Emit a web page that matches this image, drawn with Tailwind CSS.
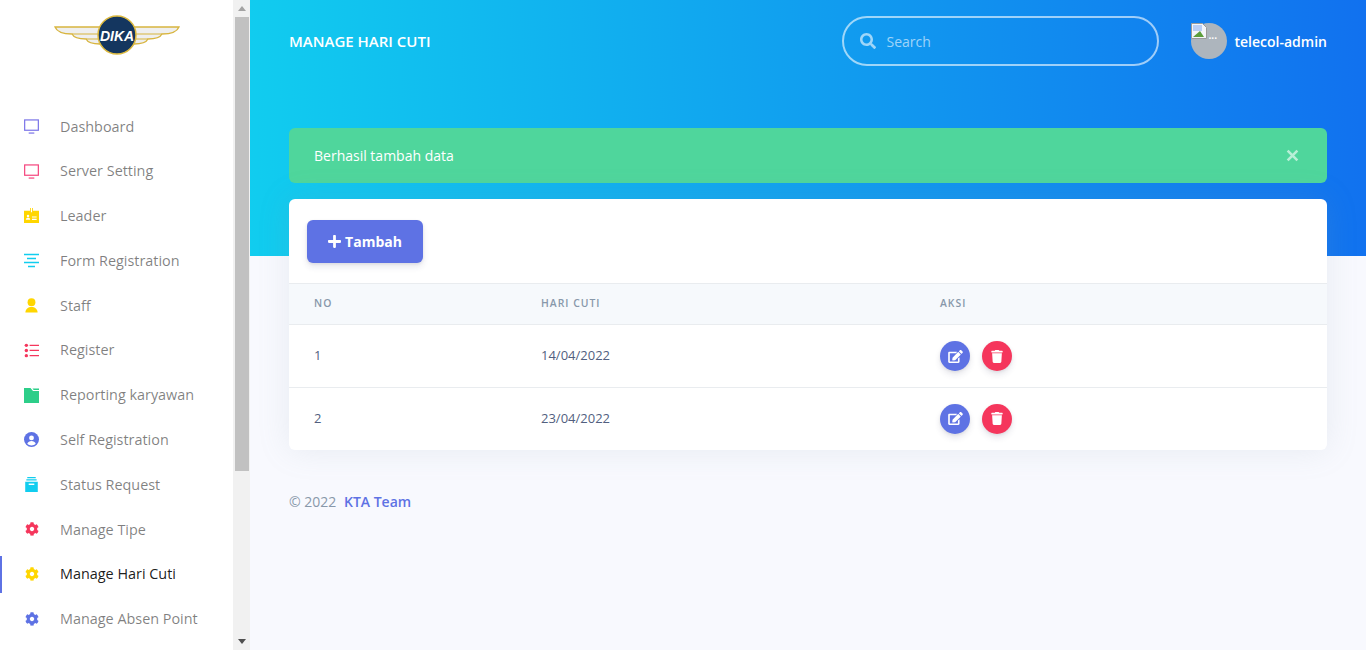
<!DOCTYPE html>
<html lang="id">
<head>
  <meta charset="UTF-8" />
  <meta name="viewport" content="width=device-width, initial-scale=1.0" />
  <title>Manage Hari Cuti</title>
  <script src="https://cdn.jsdelivr.net/npm/@tailwindcss/browser@4"></script>
</head>
<body class="bg-[#f8f9fe] h-[650px] overflow-hidden font-['Open_Sans',sans-serif] text-[#525f7f]">
  <div class="flex h-[650px]">

    <!-- sidebar -->
    <aside class="w-[250px] h-[650px] shrink-0 bg-white flex">
      <div class="w-[233px] overflow-hidden">
        <div class="h-[103.95px] pt-[15px] flex justify-center items-start">
          <svg width="126" height="42" viewBox="0 0 126 42">
            <path d="M1 12 H125 C123 17 117 19 108 19 C106 23 100 24 94 24 C92 28 86 29 80 29 H46 C40 29 34 28 32 24 C26 24 20 23 18 19 C9 19 3 17 1 12 Z" fill="#efefef" stroke="#d8b53f" stroke-width="1.3"/>
            <path d="M18 19 H108 M32 24 H94" stroke="#d8b53f" stroke-width="1.2" fill="none"/>
            <circle cx="63" cy="20" r="19" fill="#14365f" stroke="#dcb93f" stroke-width="1.5"/>
            <text x="63" y="25.5" text-anchor="middle" font-family="'Liberation Sans',sans-serif" font-weight="700" font-style="italic" font-size="14" fill="#ffffff">DIKA</text>
          </svg>
        </div>
        <nav class="flex flex-col text-[14.4px] text-black/50">
          <a class="flex items-center h-[44.79px] pl-6">
            <svg class="w-[15px] h-[15px] mr-[21px] shrink-0" viewBox="0 0 16 16" fill="none" stroke="#7c75e8" stroke-width="1.3"><rect x="0.7" y="1" width="14.6" height="11"/><path d="M5 15h6"/></svg>Dashboard
          </a>
          <a class="flex items-center h-[44.79px] pl-6">
            <svg class="w-[15px] h-[15px] mr-[21px] shrink-0" viewBox="0 0 16 16" fill="none" stroke="#f5477f" stroke-width="1.3"><rect x="0.7" y="1" width="14.6" height="11"/><path d="M5 15h6"/></svg>Server Setting
          </a>
          <a class="flex items-center h-[44.79px] pl-6">
            <svg class="w-[15px] h-[15px] mr-[21px] shrink-0" viewBox="0 0 16 16"><path fill="#ffd600" d="M0 3h6.5V0h3v3H16v13H0z"/><path fill="#fff" d="M7.4 0h1.2v4.5H7.4zM3 8.500a1.300 1.300 0 1 1 2.600 0a1.300 1.300 0 1 1-2.600 0zM2 12.500c0-1.500 1-2 2.300-2s2.300.5 2.300 2zM8.500 9h5v1.200h-5zM8.500 11.500h5v1.200h-5z"/></svg>Leader
          </a>
          <a class="flex items-center h-[44.79px] pl-6">
            <svg class="w-[15px] h-[15px] mr-[21px] shrink-0" viewBox="0 0 15 15" stroke="#11cdef" stroke-width="1.5" fill="none"><path d="M0 1.500h15M3 5.500h9M0 9.500h15M4 13.500h7"/></svg>Form Registration
          </a>
          <a class="flex items-center h-[44.79px] pl-6">
            <svg class="w-[15px] h-[15px] mr-[21px] shrink-0" viewBox="0 0 16 16" fill="#ffd600"><circle cx="8" cy="4.500" r="4.200"/><path d="M1.500 15.500c0-4 3-6 6.500-6s6.500 2 6.500 6z"/></svg>Staff
          </a>
          <a class="flex items-center h-[44.79px] pl-6">
            <svg class="w-[15px] h-[15px] mr-[21px] shrink-0" viewBox="0 0 16 16" fill="#f5365c"><circle cx="2.500" cy="2.500" r="1.800"/><circle cx="2.500" cy="8" r="1.800"/><circle cx="2.500" cy="13.500" r="1.800"/><path d="M6 1.800h10v1.300H6zM6 7.300h10v1.300H6zM6 12.800h10v1.300H6z"/></svg>Register
          </a>
          <a class="flex items-center h-[44.79px] pl-6">
            <svg class="w-[15px] h-[15px] mr-[21px] shrink-0" viewBox="0 0 15 15" fill="#2dce89"><path d="M0 0h6.500l2.500 3h6V15H0z"/><path d="M8.500 0.500h6.500v1.500H9.700z"/></svg>Reporting karyawan
          </a>
          <a class="flex items-center h-[44.79px] pl-6">
            <svg class="w-[15px] h-[15px] mr-[21px] shrink-0" viewBox="0 0 16 16"><circle cx="8" cy="8" r="8" fill="#5e72e4"/><circle cx="8" cy="6.300" r="2.600" fill="#fff"/><path fill="#fff" d="M3.500 12.500c.7-2 2.500-3 4.500-3s3.800 1 4.500 3c-1.200 1.200-2.800 1.800-4.500 1.800s-3.300-.6-4.500-1.800z"/></svg>Self Registration
          </a>
          <a class="flex items-center h-[44.79px] pl-6">
            <svg class="w-[15px] h-[15px] mr-[21px] shrink-0" viewBox="0 0 16 16" fill="#11cdef"><path d="M3.500 0h9v1.200h-9zM2.500 2.500h11v1.200h-11zM1.300 5h13.400v11H1.300z"/><path fill="#fff" d="M5 7h6v1.500H5z"/></svg>Status Request
          </a>
          <a class="flex items-center h-[44.79px] pl-6">
            <svg class="w-[14px] h-[14px] ml-[1px] mr-[21px] shrink-0" viewBox="0 0 512 512" fill="#f5365c"><path d="M487.4 315.7l-42.6-24.6c4.3-23.2 4.3-47 0-70.2l42.6-24.6c4.9-2.8 7.1-8.6 5.5-14-11.1-35.6-30-67.8-54.7-94.6-3.8-4.1-10-5.1-14.8-2.3L380.8 110c-17.9-15.4-38.5-27.3-60.8-35.1V25.8c0-5.6-3.9-10.5-9.4-11.7-36.7-8.2-74.3-7.8-109.2 0-5.5 1.2-9.4 6.1-9.4 11.7V75c-22.2 7.9-42.8 19.8-60.8 35.1L88.7 85.5c-4.9-2.8-11-1.9-14.8 2.3-24.7 26.7-43.6 58.9-54.7 94.6-1.7 5.4.6 11.2 5.5 14L67.3 221c-4.3 23.2-4.3 47 0 70.2l-42.6 24.6c-4.9 2.8-7.1 8.6-5.5 14 11.1 35.6 30 67.8 54.7 94.6 3.8 4.1 10 5.1 14.8 2.3l42.6-24.6c17.9 15.4 38.5 27.3 60.8 35.1v49.2c0 5.6 3.9 10.5 9.4 11.7 36.7 8.2 74.3 7.8 109.2 0 5.5-1.2 9.4-6.1 9.4-11.7v-49.2c22.2-7.9 42.8-19.8 60.8-35.1l42.6 24.6c4.9 2.8 11 1.9 14.8-2.3 24.7-26.7 43.6-58.9 54.7-94.6 1.5-5.5-.7-11.3-5.6-14.1zM256 336c-44.1 0-80-35.9-80-80s35.9-80 80-80 80 35.9 80 80-35.9 80-80 80z"/></svg>Manage Tipe
          </a>
          <a class="relative flex items-center h-[44.79px] pl-6 text-black/90">
            <span class="absolute left-0 top-[4px] bottom-[4px] w-[2px] bg-[#5e72e4]"></span>
            <svg class="w-[14px] h-[14px] ml-[1px] mr-[21px] shrink-0" viewBox="0 0 512 512" fill="#ffd600"><path d="M487.4 315.7l-42.6-24.6c4.3-23.2 4.3-47 0-70.2l42.6-24.6c4.9-2.8 7.1-8.6 5.5-14-11.1-35.6-30-67.8-54.7-94.6-3.8-4.1-10-5.1-14.8-2.3L380.8 110c-17.9-15.4-38.5-27.3-60.8-35.1V25.8c0-5.6-3.9-10.5-9.4-11.7-36.7-8.2-74.3-7.8-109.2 0-5.5 1.2-9.4 6.1-9.4 11.7V75c-22.2 7.9-42.8 19.8-60.8 35.1L88.7 85.5c-4.9-2.8-11-1.9-14.8 2.3-24.7 26.7-43.6 58.9-54.7 94.6-1.7 5.4.6 11.2 5.5 14L67.3 221c-4.3 23.2-4.3 47 0 70.2l-42.6 24.6c-4.9 2.8-7.1 8.6-5.5 14 11.1 35.6 30 67.8 54.7 94.6 3.8 4.1 10 5.1 14.8 2.3l42.6-24.6c17.9 15.4 38.5 27.3 60.8 35.1v49.2c0 5.6 3.9 10.5 9.4 11.7 36.7 8.2 74.3 7.8 109.2 0 5.5-1.2 9.4-6.1 9.4-11.7v-49.2c22.2-7.9 42.8-19.8 60.8-35.1l42.6 24.6c4.9 2.8 11 1.9 14.8-2.3 24.7-26.7 43.6-58.9 54.7-94.6 1.5-5.5-.7-11.3-5.6-14.1zM256 336c-44.1 0-80-35.9-80-80s35.9-80 80-80 80 35.9 80 80-35.9 80-80 80z"/></svg>Manage Hari Cuti
          </a>
          <a class="flex items-center h-[44.79px] pl-6">
            <svg class="w-[14px] h-[14px] ml-[1px] mr-[21px] shrink-0" viewBox="0 0 512 512" fill="#5e72e4"><path d="M487.4 315.7l-42.6-24.6c4.3-23.2 4.3-47 0-70.2l42.6-24.6c4.9-2.8 7.1-8.6 5.5-14-11.1-35.6-30-67.8-54.7-94.6-3.8-4.1-10-5.1-14.8-2.3L380.8 110c-17.9-15.4-38.5-27.3-60.8-35.1V25.8c0-5.6-3.9-10.5-9.4-11.7-36.7-8.2-74.3-7.8-109.2 0-5.5 1.2-9.4 6.1-9.4 11.7V75c-22.2 7.9-42.8 19.8-60.8 35.1L88.7 85.5c-4.9-2.8-11-1.9-14.8 2.3-24.7 26.7-43.6 58.9-54.7 94.6-1.7 5.4.6 11.2 5.5 14L67.3 221c-4.3 23.2-4.3 47 0 70.2l-42.6 24.6c-4.9 2.8-7.1 8.6-5.5 14 11.1 35.6 30 67.8 54.7 94.6 3.8 4.1 10 5.1 14.8 2.3l42.6-24.6c17.9 15.4 38.5 27.3 60.8 35.1v49.2c0 5.6 3.9 10.5 9.4 11.7 36.7 8.2 74.3 7.8 109.2 0 5.5-1.2 9.4-6.1 9.4-11.7v-49.2c22.2-7.9 42.8-19.8 60.8-35.1l42.6 24.6c4.9 2.8 11 1.9 14.8-2.3 24.7-26.7 43.6-58.9 54.7-94.6 1.5-5.5-.7-11.3-5.6-14.1zM256 336c-44.1 0-80-35.9-80-80s35.9-80 80-80 80 35.9 80 80-35.9 80-80 80z"/></svg>Manage Absen Point
          </a>
        </nav>
      </div>

      <!-- scrollbar -->
      <div class="w-[17px] h-[650px] bg-[#f1f1f1] flex flex-col items-center">
        <div class="h-[17px] flex items-center justify-center">
          <svg width="8" height="5" viewBox="0 0 8 5" fill="#a3a3a3"><path d="M4 0l4 5H0z"/></svg>
        </div>
        <div class="w-[14px] h-[454px] ml-[1px] bg-[#c1c1c1]"></div>
        <div class="mt-auto h-[17px] flex items-center justify-center">
          <svg width="8" height="5" viewBox="0 0 8 5" fill="#505050"><path d="M0 0h8L4 5z"/></svg>
        </div>
      </div>
    </aside>

    <!-- main -->
    <main class="flex-1 min-w-0">
      <div class="h-[256px] bg-[linear-gradient(87deg,#11cdef_0,#1171ef_100%)]">
        <div class="h-[82px] px-[39px] flex items-center text-white">
          <span class="text-[15px] font-semibold uppercase">Manage Hari Cuti</span>
          <div class="ml-auto w-[317px] h-[50px] rounded-full border-2 border-white/60 flex items-center pl-[16px]">
            <svg class="w-[16px] h-[16px] mr-[11px] text-white/60" viewBox="0 0 512 512" fill="currentColor"><path d="M505 442.7L405.3 343c-4.5-4.5-10.6-7-17-7H372c27.6-35.3 44-79.7 44-128C416 93.1 322.9 0 208 0S0 93.1 0 208s93.1 208 208 208c48.3 0 92.7-16.4 128-44v16.3c0 6.4 2.5 12.5 7 17l99.7 99.7c9.4 9.4 24.6 9.4 33.9 0l28.3-28.3c9.4-9.4 9.4-24.6.1-34zM208 336c-70.7 0-128-57.2-128-128 0-70.7 57.2-128 128-128 70.7 0 128 57.2 128 128 0 70.7-57.2 128-128 128z"/></svg>
            <span class="pt-[2px] text-sm text-white/60">Search</span>
          </div>
          <div class="ml-[32px] flex items-center">
            <div class="relative w-[36px] h-[36px] rounded-full bg-[#adb5bd]">
              <svg class="absolute left-0 top-0" width="16" height="16" viewBox="0 0 16 16"><path d="M.5.5h11l4 4v11H.5z" fill="#f3f5fa" stroke="#9a9a9a"/><path d="M2 2h9v6H2z" fill="#b9cdf4"/><path d="M2 14l7-6 4 6z" fill="#5c9e3c"/></svg>
              <span class="absolute left-[18px] top-[5px] text-[10px] leading-[14px] font-bold text-white">...</span>
            </div>
            <span class="ml-[8px] pt-[2px] text-sm font-semibold">telecol-admin</span>
          </div>
        </div>
      </div>

      <div class="-mt-[128px] px-[39px]">
        <div class="h-[55px] rounded-md bg-[#4fd69c] flex items-center justify-between pl-[25px] pr-[28px] text-sm text-white">
          <span>Berhasil tambah data</span>
          <svg class="w-[13px] h-[13px] text-white/60" viewBox="0 0 12 12" stroke="currentColor" stroke-width="2.4" fill="none"><path d="M1.500 1.500l9 9M10.500 1.500l-9 9"/></svg>
        </div>

        <div class="mt-4 bg-white rounded-md shadow-[0_0_32px_rgba(136,152,170,0.15)] overflow-hidden">
          <div class="h-[84px] pl-[18px] pt-[21px]">
            <button class="h-[43px] w-[116px] rounded-md bg-[#5e72e4] text-white text-sm font-bold flex items-center justify-center gap-[4px] shadow-[0_4px_6px_rgba(50,50,93,0.11),0_1px_3px_rgba(0,0,0,0.08)]">
              <svg class="w-[13px] h-[15px]" viewBox="0 0 448 512" fill="currentColor"><path d="M416 208H272V64c0-17.67-14.33-32-32-32h-32c-17.67 0-32 14.33-32 32v144H32c-17.67 0-32 14.33-32 32v32c0 17.67 14.33 32 32 32h144v144c0 17.67 14.33 32 32 32h32c17.67 0 32-14.33 32-32V304h144c17.67 0 32-14.33 32-32v-32c0-17.67-14.33-32-32-32z"/></svg>Tambah
            </button>
          </div>
          <table class="w-full table-fixed border-collapse">
            <thead>
              <tr class="h-[41px] bg-[#f6f9fc] border-y border-[#e9ecef] text-left text-[10.4px] font-semibold uppercase tracking-[1px] text-[#8898aa]">
                <th class="w-[228px] pl-[25px] font-semibold">No</th>
                <th class="w-[399px] pl-[24px] font-semibold">Hari Cuti</th>
                <th class="pl-[24px] font-semibold">Aksi</th>
              </tr>
            </thead>
            <tbody class="text-[13px]">
              <tr class="h-[63px] border-b border-[#e9ecef]">
                <td class="pl-[25px]">1</td>
                <td class="pl-[24px]">14/04/2022</td>
                <td class="pl-[24px]">
                  <div class="flex gap-3">
                    <button class="w-[30px] h-[30px] rounded-full bg-[#5e72e4] text-white flex items-center justify-center shadow-[0_4px_6px_rgba(50,50,93,0.11),0_1px_3px_rgba(0,0,0,0.08)]">
                      <svg class="w-[15px] h-[13px]" viewBox="0 0 576 512" fill="currentColor"><path d="M402.6 83.2l90.2 90.2c3.8 3.8 3.8 10 0 13.8L274.4 405.6l-92.8 10.3c-12.4 1.4-22.9-9.1-21.5-21.5l10.3-92.8L388.8 83.2c3.8-3.8 10-3.8 13.8 0zm162-22.9l-48.8-48.8c-15.2-15.2-39.9-15.2-55.2 0l-35.4 35.4c-3.8 3.8-3.8 10 0 13.8l90.2 90.2c3.8 3.8 10 3.8 13.8 0l35.4-35.4c15.2-15.3 15.2-40 0-55.2zM384 346.2V448H64V128h229.8c3.2 0 6.2-1.3 8.5-3.5l40-40c7.6-7.6 2.2-20.5-8.5-20.5H48C21.5 64 0 85.5 0 112v352c0 26.5 21.5 48 48 48h352c26.5 0 48-21.5 48-48V306.2c0-10.7-12.9-16-20.5-8.5l-40 40c-2.2 2.3-3.5 5.3-3.5 8.5z"/></svg>
                    </button>
                    <button class="w-[30px] h-[30px] rounded-full bg-[#f5365c] text-white flex items-center justify-center shadow-[0_4px_6px_rgba(50,50,93,0.11),0_1px_3px_rgba(0,0,0,0.08)]">
                      <svg class="w-[12px] h-[13px]" viewBox="0 0 448 512" fill="currentColor"><path d="M432 32H312l-9.4-18.7A24 24 0 0 0 281.1 0H166.8a23.72 23.72 0 0 0-21.4 13.3L136 32H16A16 16 0 0 0 0 48v32a16 16 0 0 0 16 16h416a16 16 0 0 0 16-16V48a16 16 0 0 0-16-16zM53.2 467a48 48 0 0 0 47.9 45h245.8a48 48 0 0 0 47.9-45L416 128H32z"/></svg>
                    </button>
                  </div>
                </td>
              </tr>
              <tr class="h-[62px]">
                <td class="pl-[25px]">2</td>
                <td class="pl-[24px]">23/04/2022</td>
                <td class="pl-[24px]">
                  <div class="flex gap-3">
                    <button class="w-[30px] h-[30px] rounded-full bg-[#5e72e4] text-white flex items-center justify-center shadow-[0_4px_6px_rgba(50,50,93,0.11),0_1px_3px_rgba(0,0,0,0.08)]">
                      <svg class="w-[15px] h-[13px]" viewBox="0 0 576 512" fill="currentColor"><path d="M402.6 83.2l90.2 90.2c3.8 3.8 3.8 10 0 13.8L274.4 405.6l-92.8 10.3c-12.4 1.4-22.9-9.1-21.5-21.5l10.3-92.8L388.8 83.2c3.8-3.8 10-3.8 13.8 0zm162-22.9l-48.8-48.8c-15.2-15.2-39.9-15.2-55.2 0l-35.4 35.4c-3.8 3.8-3.8 10 0 13.8l90.2 90.2c3.8 3.8 10 3.8 13.8 0l35.4-35.4c15.2-15.3 15.2-40 0-55.2zM384 346.2V448H64V128h229.8c3.2 0 6.2-1.3 8.5-3.5l40-40c7.6-7.6 2.2-20.5-8.5-20.5H48C21.5 64 0 85.5 0 112v352c0 26.5 21.5 48 48 48h352c26.5 0 48-21.5 48-48V306.2c0-10.7-12.9-16-20.5-8.5l-40 40c-2.2 2.3-3.5 5.3-3.5 8.5z"/></svg>
                    </button>
                    <button class="w-[30px] h-[30px] rounded-full bg-[#f5365c] text-white flex items-center justify-center shadow-[0_4px_6px_rgba(50,50,93,0.11),0_1px_3px_rgba(0,0,0,0.08)]">
                      <svg class="w-[12px] h-[13px]" viewBox="0 0 448 512" fill="currentColor"><path d="M432 32H312l-9.4-18.7A24 24 0 0 0 281.1 0H166.8a23.72 23.72 0 0 0-21.4 13.3L136 32H16A16 16 0 0 0 0 48v32a16 16 0 0 0 16 16h416a16 16 0 0 0 16-16V48a16 16 0 0 0-16-16zM53.2 467a48 48 0 0 0 47.9 45h245.8a48 48 0 0 0 47.9-45L416 128H32z"/></svg>
                    </button>
                  </div>
                </td>
              </tr>
            </tbody>
          </table>
        </div>

        <footer class="mt-[42px] text-sm text-[#8898aa]">
          © 2022 <a class="ml-1 font-semibold text-[#5e72e4]">KTA Team</a>
        </footer>
      </div>
    </main>
  </div>
</body>
</html>
